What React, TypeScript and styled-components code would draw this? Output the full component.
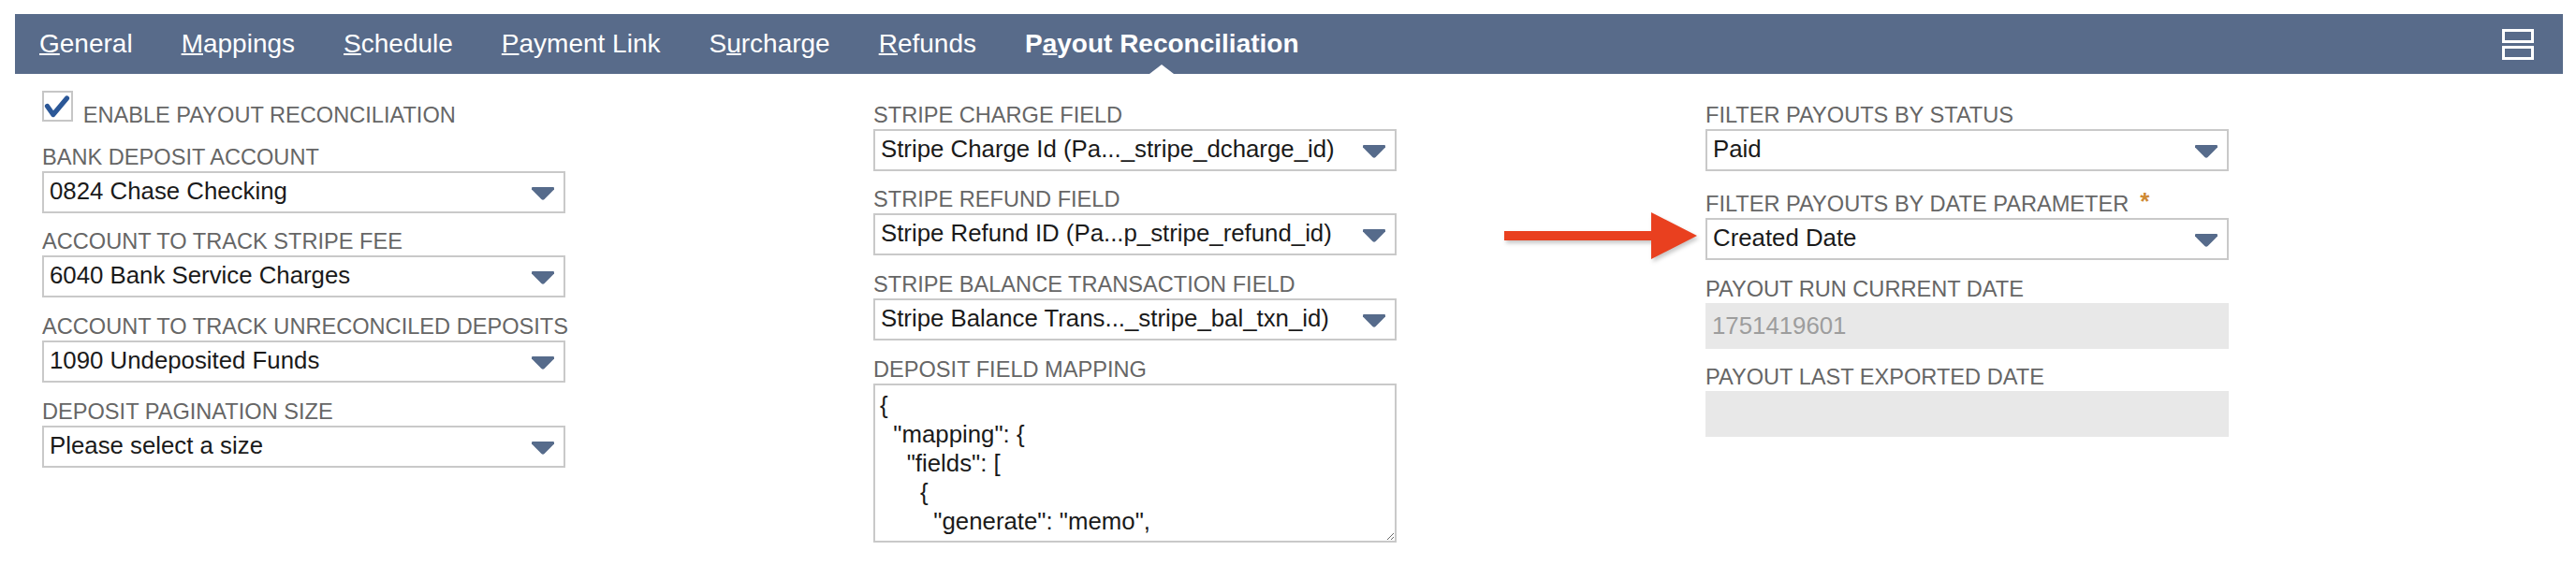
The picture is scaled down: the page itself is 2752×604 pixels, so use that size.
import React from 'react';
import styled, { createGlobalStyle, css } from 'styled-components';

const GlobalStyle = createGlobalStyle`
  html, body { margin: 0; padding: 0; background: #fff; }
  body { font-family: "Liberation Sans", Arial, Helvetica, sans-serif; }
  * { box-sizing: border-box; }
`;

const Page = styled.div`
  width: 2752px;
  height: 604px;
  padding: 15px 14px 0 16px;
  overflow: hidden;
`;

const TabBar = styled.nav`
  display: flex;
  align-items: stretch;
  height: 64px;
  background: #586b8a;
`;

const Tab = styled.span<{ $active?: boolean }>`
  position: relative;
  padding: 0 26px;
  font-size: 28px;
  line-height: 64px;
  color: #fff;
  font-weight: ${(p) => (p.$active ? 700 : 400)};
  white-space: nowrap;
  u {
    text-decoration-thickness: 2px;
  }
  ${(p) =>
    p.$active &&
    css`
      &::after {
        content: '';
        position: absolute;
        left: 50%;
        bottom: 0;
        margin-left: -13px;
        border-left: 13px solid transparent;
        border-right: 13px solid transparent;
        border-bottom: 10px solid #fff;
      }
    `}
`;

const BarIcon = styled.span`
  margin-left: auto;
  margin-right: 31px;
  display: flex;
  align-items: center;
`;

const Content = styled.div`
  display: grid;
  grid-template-columns: 888px 889px 1fr;
  padding: 13px 0 0 29px;
`;

const Column = styled.div`
  display: flex;
  flex-direction: column;
`;

const Field = styled.div`
  padding-top: 16.7px;
`;

const Label = styled.div<{ $required?: boolean }>`
  font-size: 23.6px;
  line-height: 28px;
  color: #666;
  text-transform: uppercase;
  margin-bottom: 1px;
  white-space: nowrap;
  ${(p) =>
    p.$required &&
    css`
      padding-top: 3.5px;
    `}
`;

const Required = styled.span`
  position: relative;
  top: -2px;
  margin-left: 12px;
  font-size: 26px;
  font-weight: 700;
  color: #cf8a34;
`;

const CheckRow = styled.div`
  display: flex;
  align-items: flex-end;
  padding-top: 5.3px;
`;

const CheckBox = styled.span`
  display: block;
  width: 33px;
  height: 33px;
  border: 2px solid #c6c6c6;
  margin: 0 10.7px 6.7px 0;
  background: #fff;
`;

const CheckLabel = styled.span`
  font-size: 23.6px;
  line-height: 28px;
  color: #666;
  text-transform: uppercase;
  white-space: nowrap;
`;

const SelectBox = styled.div`
  position: relative;
  display: flex;
  align-items: center;
  width: 559px;
  height: 45px;
  border: 2px solid #c9c9c9;
  background: #fff;
  padding: 0 10px 2px 6px;
`;

const SelectValue = styled.span`
  flex: 1;
  font-size: 25.8px;
  color: #1a1a1a;
  white-space: nowrap;
  overflow: hidden;
`;

const Caret = styled.svg`
  flex: none;
  margin-top: 5px;
`;

const ReadOnlyBox = styled.div`
  width: 559px;
  height: 49px;
  background: #e8e8e8;
  padding-left: 7px;
  font-size: 25.8px;
  line-height: 49px;
  color: #9d9d9d;
`;

const MappingArea = styled.textarea`
  display: block;
  width: 559px;
  height: 170px;
  margin: 0;
  border: 2px solid #c9c9c9;
  padding: 6px 5px;
  font-family: inherit;
  font-size: 25.8px;
  line-height: 31px;
  color: #1a1a1a;
  background: #fff;
  resize: both;
  overflow: hidden;
  white-space: pre;
  outline: none;
`;

const Pointer = styled.svg`
  position: absolute;
  left: -217px;
  top: -7.5px;
  filter: drop-shadow(2px 3px 2px rgba(0, 0, 0, 0.22));
`;

const DownCaret = () => (
  <Caret width="24" height="14" viewBox="0 0 24 14">
    <path d="M1 0 H23 Q24 0 24 1.2 V2.6 L13.6 13 Q12 14.4 10.4 13 L0 2.6 V1.2 Q0 0 1 0 Z" fill="#566b8b" />
  </Caret>
);

const Select = ({ value, children }: { value: string; children?: React.ReactNode }) => (
  <SelectBox>
    <SelectValue>{value}</SelectValue>
    <DownCaret />
    {children}
  </SelectBox>
);

const mapping = `{
  "mapping": {
    "fields": [
      {
        "generate": "memo",
        "source": "id"
      }
    ]
  }
}`;

export default function App() {
  return (
    <>
      <GlobalStyle />
      <Page>
        <TabBar>
          <Tab>
            <u>G</u>eneral
          </Tab>
          <Tab>
            <u>M</u>appings
          </Tab>
          <Tab>
            <u>S</u>chedule
          </Tab>
          <Tab>
            <u>P</u>ayment Link
          </Tab>
          <Tab>
            S<u>u</u>rcharge
          </Tab>
          <Tab>
            <u>R</u>efunds
          </Tab>
          <Tab $active>
            P<u>a</u>yout Reconciliation
          </Tab>
          <BarIcon>
            <svg width="34" height="33" viewBox="0 0 34 33">
              <rect x="1.5" y="1.5" width="31" height="12" fill="none" stroke="#fff" strokeWidth="3" />
              <rect x="1.5" y="19.5" width="31" height="12" fill="none" stroke="#fff" strokeWidth="3" />
            </svg>
          </BarIcon>
        </TabBar>

        <Content>
          <Column>
            <CheckRow>
              <CheckBox>
                <svg width="29" height="29" viewBox="0 0 29 29">
                  <polyline
                    points="3.5,14.5 9.8,23.5 24.5,6"
                    fill="none"
                    stroke="#2b5797"
                    strokeWidth="5.2"
                    strokeLinecap="round"
                    strokeLinejoin="round"
                  />
                </svg>
              </CheckBox>
              <CheckLabel>Enable Payout Reconciliation</CheckLabel>
            </CheckRow>
            <Field>
              <Label>Bank Deposit Account</Label>
              <Select value="0824 Chase Checking" />
            </Field>
            <Field>
              <Label>Account to Track Stripe Fee</Label>
              <Select value="6040 Bank Service Charges" />
            </Field>
            <Field>
              <Label>Account to Track Unreconciled Deposits</Label>
              <Select value="1090 Undeposited Funds" />
            </Field>
            <Field>
              <Label>Deposit Pagination Size</Label>
              <Select value="Please select a size" />
            </Field>
          </Column>

          <Column>
            <Field>
              <Label>Stripe Charge Field</Label>
              <Select value="Stripe Charge Id (Pa..._stripe_dcharge_id)" />
            </Field>
            <Field>
              <Label>Stripe Refund Field</Label>
              <Select value="Stripe Refund ID (Pa...p_stripe_refund_id)" />
            </Field>
            <Field>
              <Label>Stripe Balance Transaction Field</Label>
              <Select value="Stripe Balance Trans..._stripe_bal_txn_id)" />
            </Field>
            <Field>
              <Label>Deposit Field Mapping</Label>
              <MappingArea defaultValue={mapping} readOnly spellCheck={false} />
            </Field>
          </Column>

          <Column>
            <Field>
              <Label>Filter Payouts by Status</Label>
              <Select value="Paid" />
            </Field>
            <Field>
              <Label $required>
                Filter Payouts by Date Parameter<Required>*</Required>
              </Label>
              <Select value="Created Date">
                <Pointer width="206" height="50" viewBox="0 0 206 50">
                  <polygon points="0,20 157,20 157,0 206,25 157,50 157,30 0,30" fill="#e9401f" />
                </Pointer>
              </Select>
            </Field>
            <Field>
              <Label>Payout Run Current Date</Label>
              <ReadOnlyBox>1751419601</ReadOnlyBox>
            </Field>
            <Field>
              <Label>Payout Last Exported Date</Label>
              <ReadOnlyBox />
            </Field>
          </Column>
        </Content>
      </Page>
    </>
  );
}
